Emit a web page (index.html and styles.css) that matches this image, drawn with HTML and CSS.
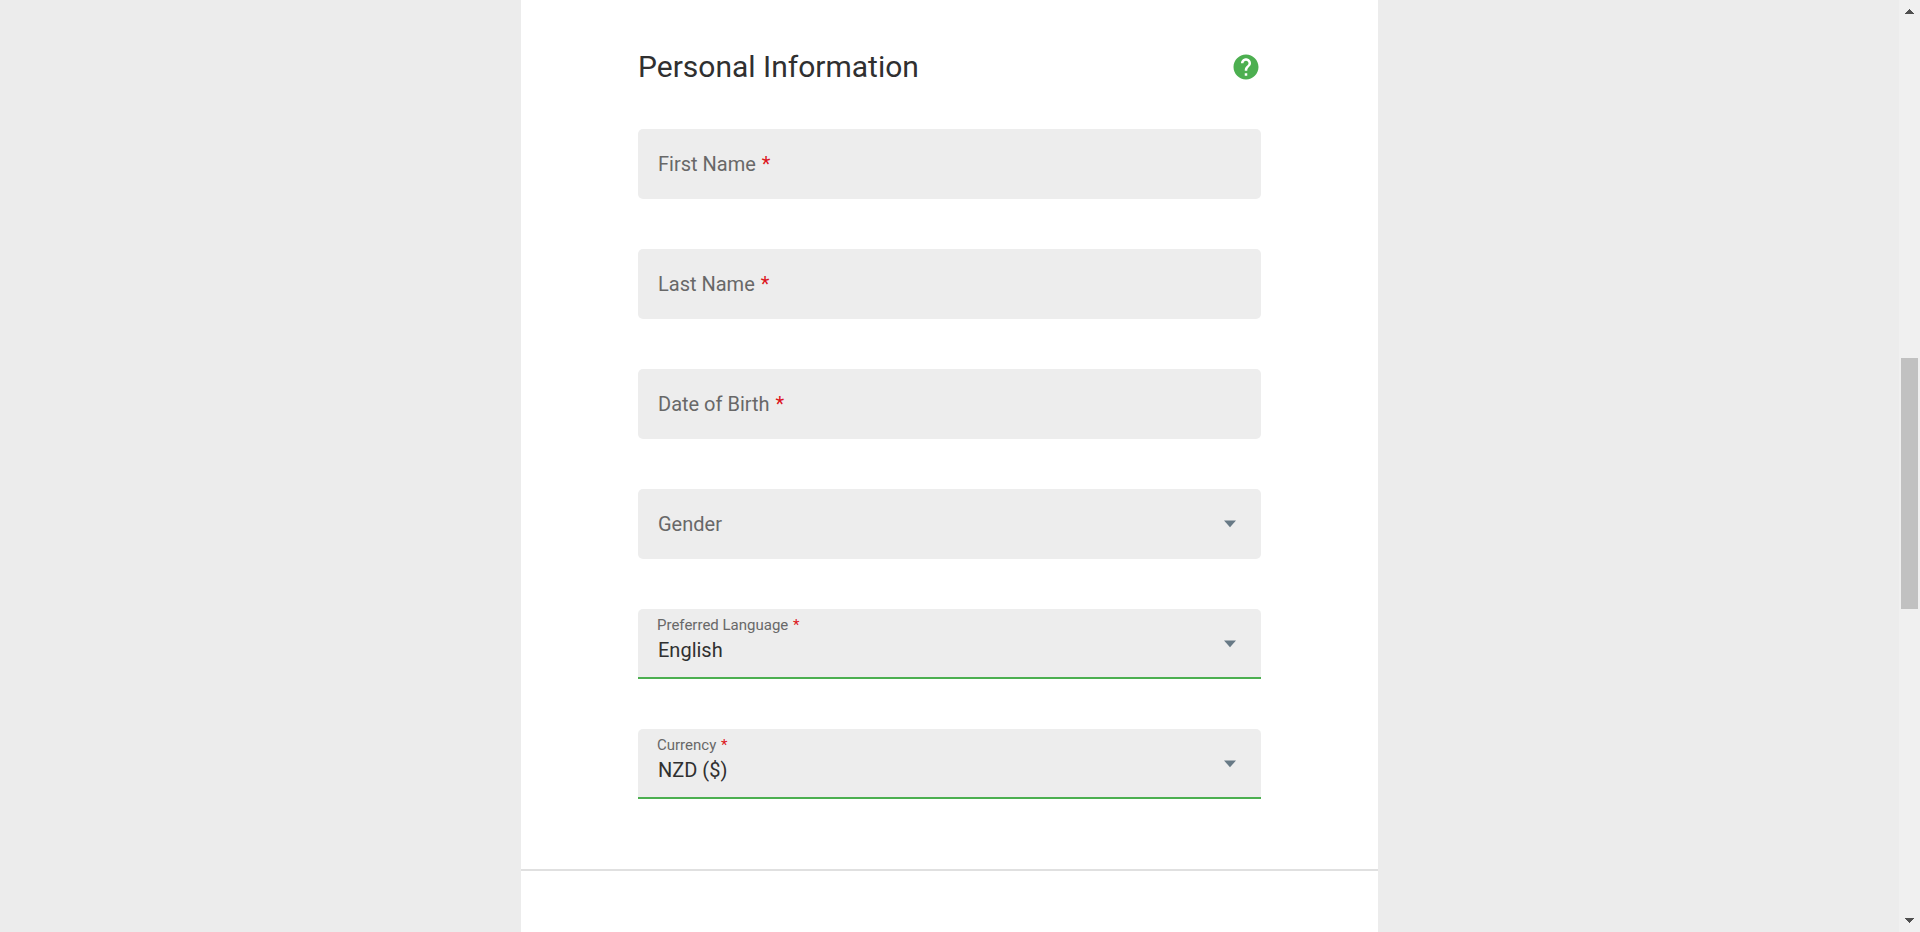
FILE: index.html
```html
<!DOCTYPE html>
<html lang="en">
<head>
<meta charset="utf-8">
<title>Personal Information</title>
<link rel="stylesheet" href="styles.css">
</head>
<body>
<div class="page">
  <main class="panel">
    <form class="section">
      <header class="section-header">
        <h1 class="title">Personal Information</h1>
        <button class="help" type="button" aria-label="Help">
          <svg class="help-icon" viewBox="0 0 24 24" aria-hidden="true"><path d="M12 2C6.48 2 2 6.48 2 12s4.48 10 10 10 10-4.480 10-10S17.520 2 12 2zm1 17h-2v-2h2v2zm2.070-7.750l-.9.920C13.450 12.900 13 13.500 13 15h-2v-.5c0-1.100.45-2.100 1.170-2.830l1.240-1.260c.37-.36.59-.86.59-1.410 0-1.100-.9-2-2-2s-2 .9-2 2H8c0-2.210 1.790-4 4-4s4 1.790 4 4c0 .88-.36 1.680-.93 2.250z"/></svg>
        </button>
      </header>
      <div class="fields">
        <div class="field">
          <label class="label" for="first-name">First Name <span class="required">*</span></label>
          <input class="control" id="first-name" type="text" required>
        </div>
        <div class="field">
          <label class="label" for="last-name">Last Name <span class="required">*</span></label>
          <input class="control" id="last-name" type="text" required>
        </div>
        <div class="field">
          <label class="label" for="birth-date">Date of Birth <span class="required">*</span></label>
          <input class="control" id="birth-date" type="text" required>
        </div>
        <div class="field">
          <label class="label" for="gender">Gender</label>
          <select class="control" id="gender"><option value=""></option></select>
          <svg class="arrow" viewBox="0 0 12 8" aria-hidden="true"><path d="M0 .5h12L6 7.300z"/></svg>
        </div>
        <div class="field filled">
          <label class="label" for="language">Preferred Language <span class="required">*</span></label>
          <select class="control" id="language" required><option>English</option></select>
          <svg class="arrow" viewBox="0 0 12 8" aria-hidden="true"><path d="M0 .5h12L6 7.300z"/></svg>
        </div>
        <div class="field filled">
          <label class="label" for="currency">Currency <span class="required">*</span></label>
          <select class="control" id="currency" required><option>NZD ($)</option></select>
          <svg class="arrow" viewBox="0 0 12 8" aria-hidden="true"><path d="M0 .5h12L6 7.300z"/></svg>
        </div>
      </div>
    </form>
  </main>
</div>
<div class="scrollbar" aria-hidden="true">
  <svg class="scroll-arrow" viewBox="0 0 21 21" shape-rendering="crispEdges"><path d="M6 14h9v-1h-1v-1h-1v-1h-1v-1h-1V9h-1v1H9v1H8v1H7v1H6z"/></svg>
  <div class="track"><div class="thumb"></div></div>
  <svg class="scroll-arrow" viewBox="0 0 21 21" shape-rendering="crispEdges"><path d="M6 7h9v1h-1v1h-1v1h-1v1h-1v1h-1v-1H9v-1H8V9H7V8H6z"/></svg>
</div>
</body>
</html>
```

FILE: styles.css
```css
* {
  box-sizing: border-box;
}

body {
  display: flex;
  height: 100vh;
  margin: 0;
  overflow: hidden;
  background: #ececec;
  color: #303030;
  font-family: Roboto, "Liberation Sans", sans-serif;
}

.page {
  display: flex;
  flex: 1;
  justify-content: center;
  min-width: 0;
}

.panel {
  width: 100%;
  max-width: 857px;
  background: #fff;
}

.section {
  padding: 47px 117px 70px;
  border-bottom: 2px solid #e0e0e0;
}

.section-header {
  display: flex;
  align-items: center;
  justify-content: space-between;
  margin-bottom: 42px;
}

.title {
  margin: 0;
  font-size: 30px;
  font-weight: 400;
  line-height: 40px;
}

.help {
  display: flex;
  padding: 0;
  border: 0;
  background: none;
  cursor: pointer;
}

.help-icon {
  width: 30px;
  height: 30px;
  fill: #4caf50;
}

.fields {
  display: grid;
  gap: 50px;
}

.field {
  display: grid;
  height: 70px;
  border-radius: 5px;
  background: #ededed;
}

.field > * {
  grid-area: 1 / 1;
}

.label {
  align-self: center;
  padding: 0 20px;
  color: #686868;
  font-size: 20px;
  line-height: 24px;
  pointer-events: none;
}

.required {
  margin-left: 1px;
  color: #dc1420;
}

.control {
  width: 100%;
  min-width: 0;
  padding: 0 20px;
  border: 0;
  border-radius: inherit;
  outline: 0;
  background: transparent;
  color: #303030;
  font: 20px/24px Roboto, "Liberation Sans", sans-serif;
  appearance: none;
}

.arrow {
  align-self: center;
  justify-self: end;
  width: 12px;
  height: 8px;
  margin-right: 25px;
  fill: #687a86;
  pointer-events: none;
}

.filled {
  border-radius: 5px 5px 0 0;
  box-shadow: inset 0 -2px #4caf50;
}

.filled .label {
  align-self: start;
  padding: 6px 19px;
  font-size: 15px;
  line-height: 20px;
}

.filled .control {
  padding-top: 12px;
}

.scrollbar {
  display: flex;
  flex-direction: column;
  width: 21px;
  background: #f0f0f0;
}

.scroll-arrow {
  width: 21px;
  height: 21px;
  fill: #505050;
}

.track {
  display: grid;
  flex: 1;
  grid-template-rows: 337fr 251fr 302fr;
  padding: 0 2px;
}

.thumb {
  grid-row: 2;
  background: #c1c1c1;
}
```
